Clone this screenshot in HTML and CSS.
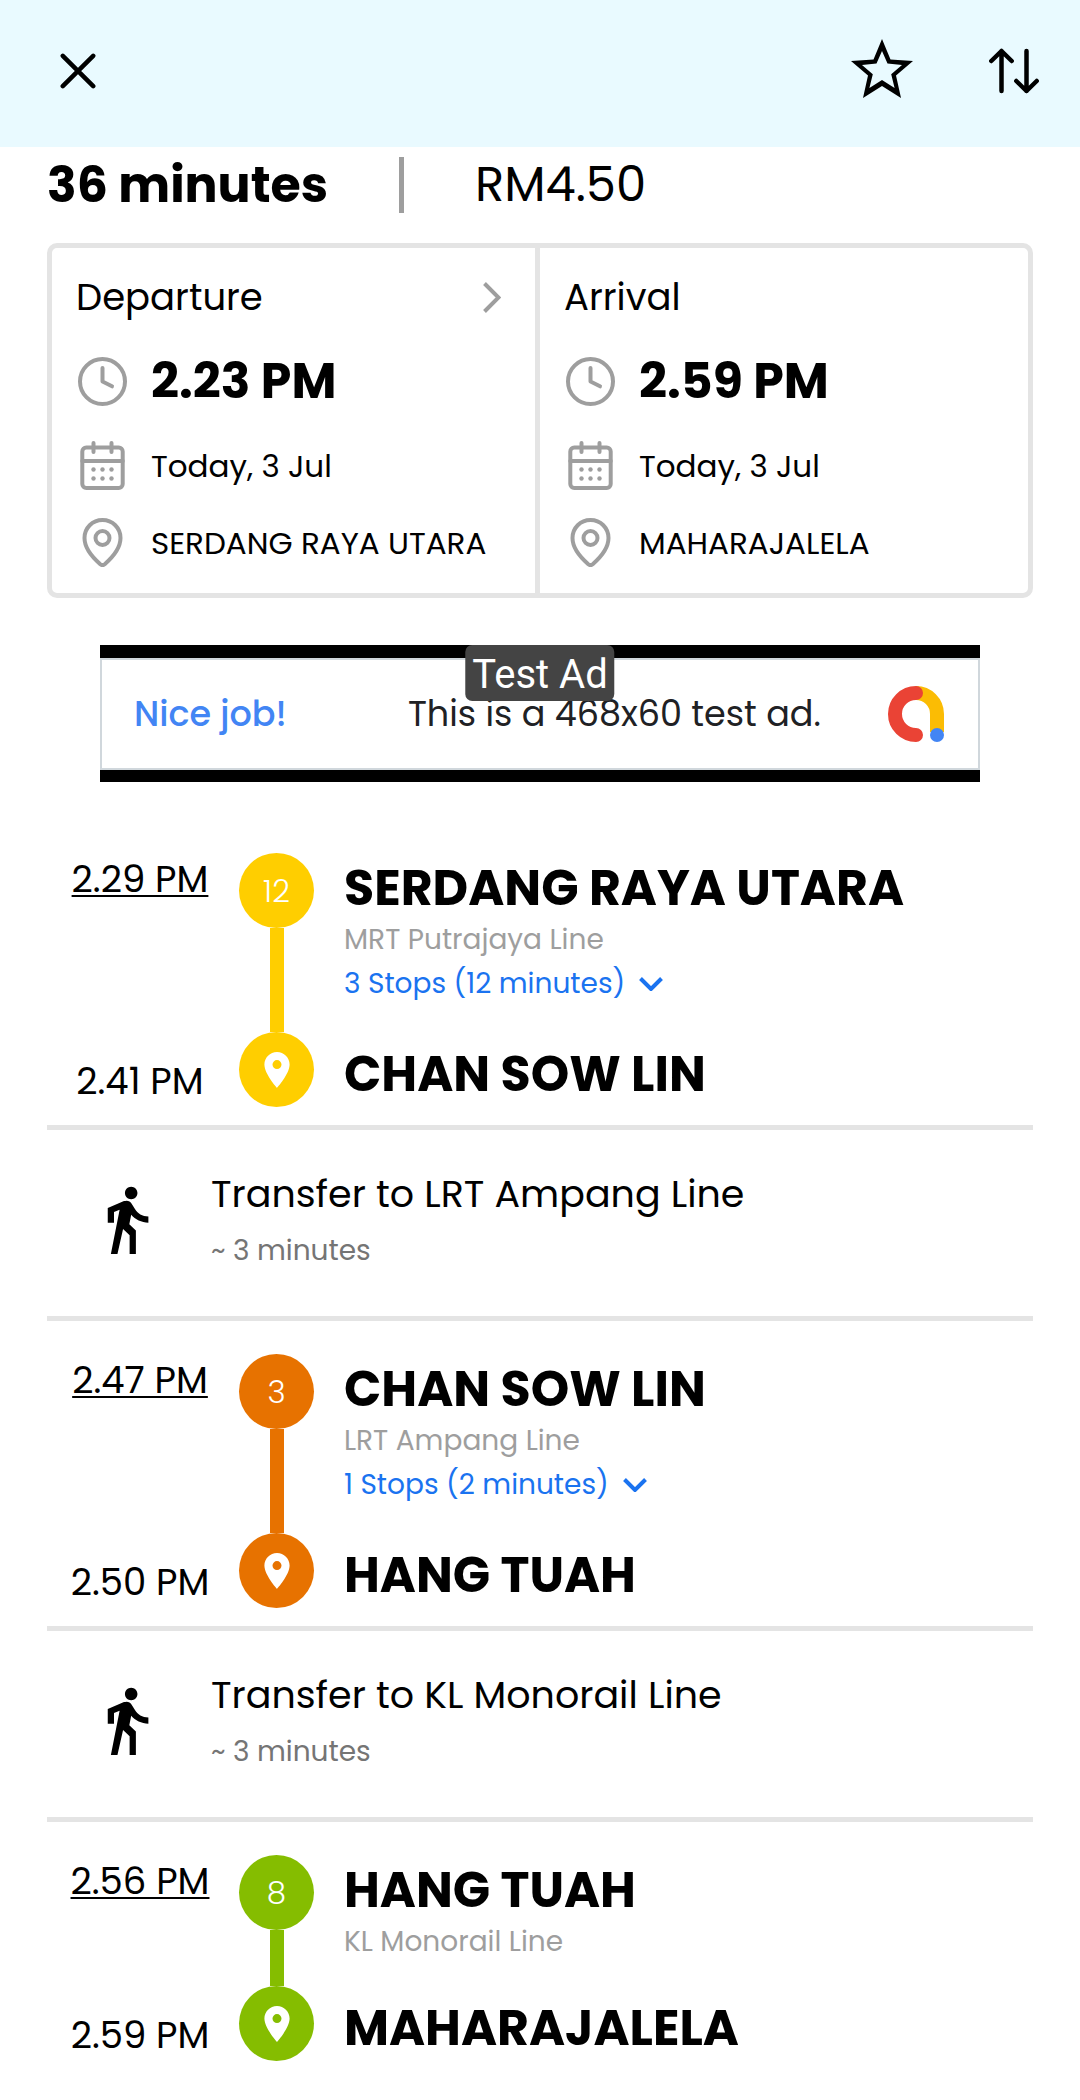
FILE: index.html
```html
<!DOCTYPE html>
<html lang="en">
<head>
<meta charset="utf-8">
<meta name="viewport" content="width=device-width, initial-scale=1">
<title>Route details</title>
<link rel="stylesheet" href="styles.css">
</head>
<body>
<svg class="sprite" aria-hidden="true">
  <symbol id="clock" viewBox="0 0 49 49"><g fill="none" stroke="currentColor" stroke-width="4" stroke-linecap="round" stroke-linejoin="round"><circle cx="24.5" cy="24.5" r="22.5"/><path d="M24.5 11v13.5l9.5 4.8"/></g></symbol>
  <symbol id="calendar" viewBox="0 0 49 49"><g fill="none" stroke="currentColor" stroke-width="4" stroke-linecap="round"><rect x="4.300" y="6.500" width="40.400" height="40.400" rx="4"/><path d="M4.300 20h40.400M15.500 2v9M33.500 2v9"/></g><g fill="currentColor"><circle cx="15.500" cy="28.500" r="2.200"/><circle cx="24.500" cy="28.500" r="2.200"/><circle cx="33.500" cy="28.500" r="2.200"/><circle cx="15.500" cy="37.500" r="2.200"/><circle cx="24.500" cy="37.500" r="2.200"/><circle cx="33.500" cy="37.500" r="2.200"/></g></symbol>
  <symbol id="place" viewBox="0 0 49 49"><g fill="none" stroke="currentColor" stroke-width="4" stroke-linejoin="round"><path d="M24.500 2C14.400 2 6.500 10 6.500 20c0 9.500 7 18.500 15.800 26.200q2.200 1.800 4.400 0C35.500 38.500 42.500 29.500 42.500 20c0-10-7.900-18-18-18z"/><circle cx="24.500" cy="20" r="7"/></g></symbol>
  <symbol id="marker" viewBox="5 2 14 20"><path fill="currentColor" d="M12 2C8.130 2 5 5.130 5 9c0 5.250 7 13 7 13s7-7.750 7-13c0-3.870-3.130-7-7-7zm0 9.500a2.500 2.500 0 1 1 0-5 2.500 2.500 0 0 1 0 5z"/></symbol>
  <symbol id="walk" viewBox="0 0 24 24"><path fill="currentColor" d="M13.500 5.500c1.100 0 2-.9 2-2s-.9-2-2-2-2 .9-2 2 .9 2 2 2zM9.800 8.900L7 23h2.100l1.800-8 2.100 2v6h2v-7.500l-2.100-2 .6-3C14.800 12 16.800 13 19 13v-2c-1.900 0-3.500-1-4.300-2.400l-1-1.600c-.4-.6-1-1-1.700-1-.3 0-.5.1-.8.1L6 8.300V13h2V9.600l1.800-.7"/></symbol>
  <symbol id="down" viewBox="0 0 24 14"><path fill="none" stroke="currentColor" stroke-width="4" d="M1.500 1.500L12 12 22.500 1.500"/></symbol>
</svg>

<header class="topbar">
  <button class="icon-button" type="button" aria-label="Close">
    <svg width="36" height="36" viewBox="0 0 36 36"><path fill="none" stroke="currentColor" stroke-width="4.500" stroke-linecap="round" d="M2.800 2.800l30.400 30.400M33.200 2.800L2.800 33.200"/></svg>
  </button>
  <div class="topbar-actions">
    <button class="icon-button" type="button" aria-label="Add to favourites">
      <svg width="62" height="64" viewBox="0 0 62 64"><path fill="currentColor" fill-rule="evenodd" d="M31 0L39.500 20.500 62 22 45 36.500 50 59 31 47 12 59 17 36.500 0 22 22.500 20.500zM31 12L25.500 24.500 11 26 21.800 35.300 18.400 49 31 41 43.600 49 40.200 35.300 51 26 36.500 24.500z"/></svg>
    </button>
    <button class="icon-button" type="button" aria-label="Swap stations">
      <svg width="50" height="46" viewBox="0 0 50 46"><path fill="none" stroke="currentColor" stroke-width="4.500" stroke-linecap="round" stroke-linejoin="round" d="M12.500 43V3M2.300 13L12.500 3l10.200 10M37.500 3v40M27.300 33l10.200 10 10.200-10"/></svg>
    </button>
  </div>
</header>

<main class="page">
  <section class="summary">
    <h1 class="strong">36 minutes</h1>
    <span class="summary-rule"></span>
    <span class="fare">RM4.50</span>
  </section>

  <section class="times">
    <div class="pane">
      <button class="pane-head" type="button">Departure
        <svg width="18" height="31" viewBox="0 0 18 31"><path fill="none" stroke="currentColor" stroke-width="4" d="M1.500 1.500l14 14-14 14"/></svg>
      </button>
      <div class="fact"><svg class="fact-icon"><use href="#clock"/></svg><span class="strong">2.23 PM</span></div>
      <div class="fact"><svg class="fact-icon"><use href="#calendar"/></svg><span>Today, 3 Jul</span></div>
      <div class="fact"><svg class="fact-icon"><use href="#place"/></svg><span>SERDANG RAYA UTARA</span></div>
    </div>
    <div class="pane">
      <div class="pane-head">Arrival</div>
      <div class="fact"><svg class="fact-icon"><use href="#clock"/></svg><span class="strong">2.59 PM</span></div>
      <div class="fact"><svg class="fact-icon"><use href="#calendar"/></svg><span>Today, 3 Jul</span></div>
      <div class="fact"><svg class="fact-icon"><use href="#place"/></svg><span>MAHARAJALELA</span></div>
    </div>
  </section>

  <aside class="ad">
    <span class="ad-badge">Test Ad</span>
    <div class="ad-body">
      <span class="ad-praise">Nice job!</span>
      <span class="ad-text">This is a 468x60 test ad.</span>
      <svg width="56" height="56" viewBox="0 0 56 56"><g fill="none" stroke-width="14"><path stroke="#fbbc04" d="M28 7a21 21 0 0 1 21 21v18"/><path stroke="#ea4335" stroke-linecap="round" d="M28 7a21 21 0 0 0 0 42"/></g><circle cx="49" cy="49" r="7" fill="#4285f4"/></svg>
    </div>
  </aside>

  <section class="leg leg-putrajaya">
    <div class="leg-times"><a href="#departures">2.29 PM</a><span>2.41 PM</span></div>
    <div class="rail"><span class="dot">12</span><span class="track"></span><span class="dot"><svg class="marker"><use href="#marker"/></svg></span></div>
    <div class="stops">
      <h2 class="strong">SERDANG RAYA UTARA</h2>
      <p class="line">MRT Putrajaya Line</p>
      <button class="more" type="button">3 Stops (12 minutes)<svg class="more-icon"><use href="#down"/></svg></button>
      <h2 class="strong last">CHAN SOW LIN</h2>
    </div>
  </section>

  <section class="transfer">
    <svg class="walk"><use href="#walk"/></svg>
    <div>
      <p class="transfer-title">Transfer to LRT Ampang Line</p>
      <p class="transfer-note">~ 3 minutes</p>
    </div>
  </section>

  <section class="leg leg-ampang">
    <div class="leg-times"><a href="#departures">2.47 PM</a><span>2.50 PM</span></div>
    <div class="rail"><span class="dot">3</span><span class="track"></span><span class="dot"><svg class="marker"><use href="#marker"/></svg></span></div>
    <div class="stops">
      <h2 class="strong">CHAN SOW LIN</h2>
      <p class="line">LRT Ampang Line</p>
      <button class="more" type="button">1 Stops (2 minutes)<svg class="more-icon"><use href="#down"/></svg></button>
      <h2 class="strong last">HANG TUAH</h2>
    </div>
  </section>

  <section class="transfer">
    <svg class="walk"><use href="#walk"/></svg>
    <div>
      <p class="transfer-title">Transfer to KL Monorail Line</p>
      <p class="transfer-note">~ 3 minutes</p>
    </div>
  </section>

  <section class="leg leg-monorail">
    <div class="leg-times"><a href="#departures">2.56 PM</a><span>2.59 PM</span></div>
    <div class="rail"><span class="dot">8</span><span class="track"></span><span class="dot"><svg class="marker"><use href="#marker"/></svg></span></div>
    <div class="stops">
      <h2 class="strong">HANG TUAH</h2>
      <p class="line">KL Monorail Line</p>
      <h2 class="strong last">MAHARAJALELA</h2>
    </div>
  </section>
</main>
</body>
</html>
```
FILE: styles.css
```css
* { box-sizing: border-box; }

body {
  margin: 0;
  background: #fff;
  color: #000;
  font-family: Poppins, Inter, "Open Sans", sans-serif;
  font-size: 37px;
  line-height: 44px;
}

h1, h2, p { margin: 0; }

button {
  border: 0;
  padding: 0;
  background: none;
  color: inherit;
  font: inherit;
  text-align: left;
}

svg { display: block; flex: none; }
a { color: inherit; }
.sprite { position: absolute; width: 0; height: 0; }

.strong {
  font-size: 49px;
  line-height: 60px;
  font-weight: 700;
}

/* Top bar */
.topbar {
  display: flex;
  align-items: center;
  justify-content: space-between;
  height: 147px;
  padding: 0 41px 5px 60px;
  background: #e9faff;
}
.topbar-actions { display: flex; align-items: center; gap: 76px; }

.page { padding: 0 47px; }

/* Duration and fare */
.summary {
  display: flex;
  align-items: center;
  gap: 71px;
  padding: 8px 0 28px;
}
.summary-rule { width: 5px; height: 56px; background: #9e9e9e; }
.fare { font-size: 48px; }

/* Departure and arrival */
.times {
  display: grid;
  grid-template-columns: 1fr 1fr;
  border: 5px solid #e4e4e4;
  border-radius: 10px;
}
.pane {
  display: flex;
  flex-direction: column;
  gap: 28px;
  padding: 25px 24px 26px;
}
.pane:first-child { border-right: 5px solid #e4e4e4; }
.pane-head {
  display: flex;
  align-items: center;
  justify-content: space-between;
  height: 48px;
  padding-right: 10px;
}
.pane-head svg { color: #9e9e9e; }
.fact {
  display: flex;
  align-items: center;
  gap: 24px;
  padding-left: 2px;
  font-size: 31px;
  white-space: nowrap;
}
.fact .strong { line-height: 64px; }
.fact-icon { width: 49px; height: 49px; color: #9e9e9e; }

/* Advertisement */
.ad {
  position: relative;
  margin: 47px 53px 38px;
  border: solid #000;
  border-width: 13px 0 12px;
}
.ad-body {
  display: flex;
  align-items: center;
  justify-content: space-between;
  height: 112px;
  padding: 0 34px 0 32px;
  border: 2px solid #d0d7dc;
  color: #202124;
  font-size: 35px;
}
.ad-praise { color: #4285f4; font-weight: 500; }
.ad-text { margin-left: 54px; }
.ad-badge {
  position: absolute;
  top: -13px;
  left: 50%;
  transform: translateX(-50%);
  padding: 4px 7px 0;
  border-radius: 7px;
  background: #444;
  color: #fff;
  font-family: Roboto, sans-serif;
  font-size: 40px;
  line-height: 52px;
  white-space: nowrap;
}

/* Train legs */
.leg {
  display: grid;
  grid-template-columns: 186px 75px 1fr;
  column-gap: 6px;
  padding: 33px 0 18px;
}
.leg-putrajaya { --line-color: #ffce00; }
.leg-ampang { --line-color: #e77200; }
.leg-monorail { --line-color: #85bd00; }
.leg-times {
  display: flex;
  flex-direction: column;
  align-items: center;
  justify-content: space-between;
  padding: 4px 0;
}
.leg-times a { text-decoration-thickness: 2px; text-underline-offset: 3px; }
.rail { display: flex; flex-direction: column; align-items: center; }
.dot {
  display: flex;
  align-items: center;
  justify-content: center;
  width: 75px;
  height: 75px;
  border-radius: 50%;
  background: var(--line-color);
  color: #fff;
  font-size: 31px;
  font-weight: 300;
}
.track { flex: 1; width: 14px; background: var(--line-color); }
.marker { width: 26px; height: 36px; }
.stops {
  display: flex;
  flex-direction: column;
  align-items: flex-start;
  padding: 5px 0 3px 24px;
  font-size: 28px;
}
.line { color: #9e9e9e; }
.more {
  display: flex;
  align-items: center;
  gap: 14px;
  padding-bottom: 4px;
  color: #1a73f0;
}
.more-icon { width: 24px; height: 14px; }
.last { margin-top: 34px; }

/* Walking transfers */
.transfer {
  display: flex;
  align-items: center;
  padding: 40px 0 43px 42px;
  border: solid #e4e4e4;
  border-width: 5px 0;
}
.walk { width: 75px; height: 75px; margin: 0 47px 5px 0; }
.transfer-title { margin-bottom: 11px; font-size: 38px; line-height: 48px; }
.transfer-note { color: #757575; font-size: 28px; }
```
